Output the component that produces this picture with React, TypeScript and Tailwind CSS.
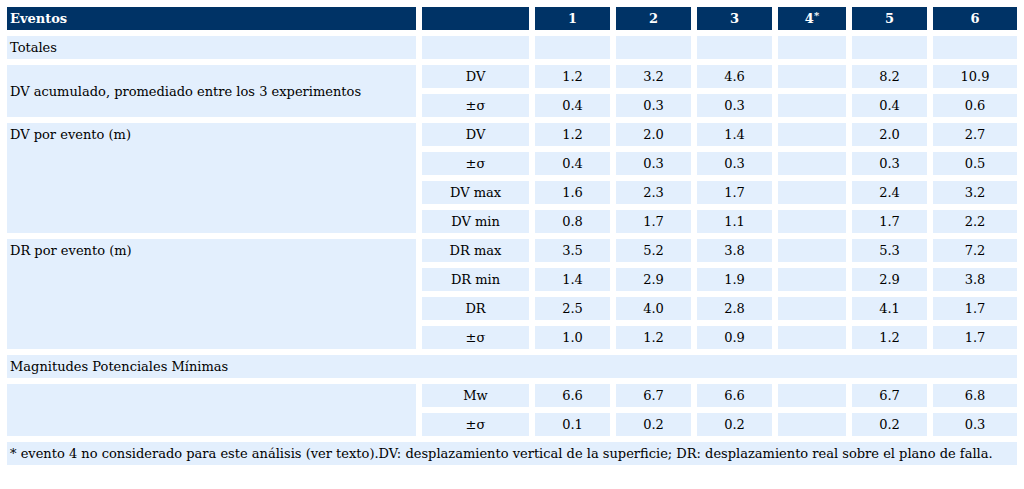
const cols = ["1", "2", "3", "4*", "5", "6"];

type Row = { label: string; values: string[] };

const dvAcum: Row[] = [
  { label: "DV", values: ["1.2", "3.2", "4.6", "", "8.2", "10.9"] },
  { label: "±σ", values: ["0.4", "0.3", "0.3", "", "0.4", "0.6"] },
];

const dvEvento: Row[] = [
  { label: "DV", values: ["1.2", "2.0", "1.4", "", "2.0", "2.7"] },
  { label: "±σ", values: ["0.4", "0.3", "0.3", "", "0.3", "0.5"] },
  { label: "DV max", values: ["1.6", "2.3", "1.7", "", "2.4", "3.2"] },
  { label: "DV min", values: ["0.8", "1.7", "1.1", "", "1.7", "2.2"] },
];

const drEvento: Row[] = [
  { label: "DR max", values: ["3.5", "5.2", "3.8", "", "5.3", "7.2"] },
  { label: "DR min", values: ["1.4", "2.9", "1.9", "", "2.9", "3.8"] },
  { label: "DR", values: ["2.5", "4.0", "2.8", "", "4.1", "1.7"] },
  { label: "±σ", values: ["1.0", "1.2", "0.9", "", "1.2", "1.7"] },
];

const magnitudes: Row[] = [
  { label: "Mw", values: ["6.6", "6.7", "6.6", "", "6.7", "6.8"] },
  { label: "±σ", values: ["0.1", "0.2", "0.2", "", "0.2", "0.3"] },
];

const cell = "bg-[#e3effd] h-[23px] p-0 leading-[23px]";

function Group({ title, rows, top }: { title: string; rows: Row[]; top?: boolean }) {
  return (
    <>
      {rows.map((r, i) => (
        <tr key={r.label + i}>
          {i === 0 && (
            <td
              rowSpan={rows.length}
              className={`bg-[#e3effd] p-0 pl-[3px] leading-[23px] ${top ? "align-top" : "align-middle"}`}
            >
              {title}
            </td>
          )}
          <td className={`${cell} text-center`}>{r.label}</td>
          {r.values.map((v, j) => (
            <td key={j} className={`${cell} text-center`}>
              {v}
            </td>
          ))}
        </tr>
      ))}
    </>
  );
}

export default function App() {
  return (
    <div className="bg-white w-[1024px] h-[489px] pl-px pt-px font-['DejaVu_Serif',serif] text-[13px] text-black">
      <table className="table-fixed border-separate border-spacing-[6px] w-[1022px]">
        <colgroup>
          <col className="w-[409px]" />
          <col className="w-[107px]" />
          <col className="w-[75px]" />
          <col className="w-[75px]" />
          <col className="w-[75px]" />
          <col className="w-[68px]" />
          <col className="w-[75px]" />
          <col className="w-[84px]" />
        </colgroup>
        <thead>
          <tr>
            <th className="bg-[#003366] h-[23px] p-0 pl-[3px] leading-[23px] text-left font-bold text-white">
              Eventos
            </th>
            <th className="bg-[#003366] h-[23px] p-0" />
            {cols.map((c) => (
              <th key={c} className="bg-[#003366] h-[23px] p-0 leading-[23px] text-center font-bold text-white">
                {c === "4*" ? (
                  <>
                    4<span className="text-[10px] align-top leading-[18px]">*</span>
                  </>
                ) : (
                  c
                )}
              </th>
            ))}
          </tr>
        </thead>
        <tbody>
          <tr>
            <td className={`${cell} pl-[3px]`}>Totales</td>
            <td className={cell} />
            {cols.map((c) => (
              <td key={c} className={cell} />
            ))}
          </tr>
          <Group title="DV acumulado, promediado entre los 3 experimentos" rows={dvAcum} />
          <Group title="DV por evento (m)" rows={dvEvento} top />
          <Group title="DR por evento (m)" rows={drEvento} top />
          <tr>
            <td colSpan={8} className={`${cell} pl-[3px]`}>
              Magnitudes Potenciales Mínimas
            </td>
          </tr>
          <Group title="" rows={magnitudes} />
          <tr>
            <td colSpan={8} className={`${cell} pl-[3px] whitespace-nowrap`}>
              * evento 4 no considerado para este análisis (ver texto).DV: desplazamiento vertical de la superficie; DR: desplazamiento real sobre el plano de falla.
            </td>
          </tr>
        </tbody>
      </table>
    </div>
  );
}
